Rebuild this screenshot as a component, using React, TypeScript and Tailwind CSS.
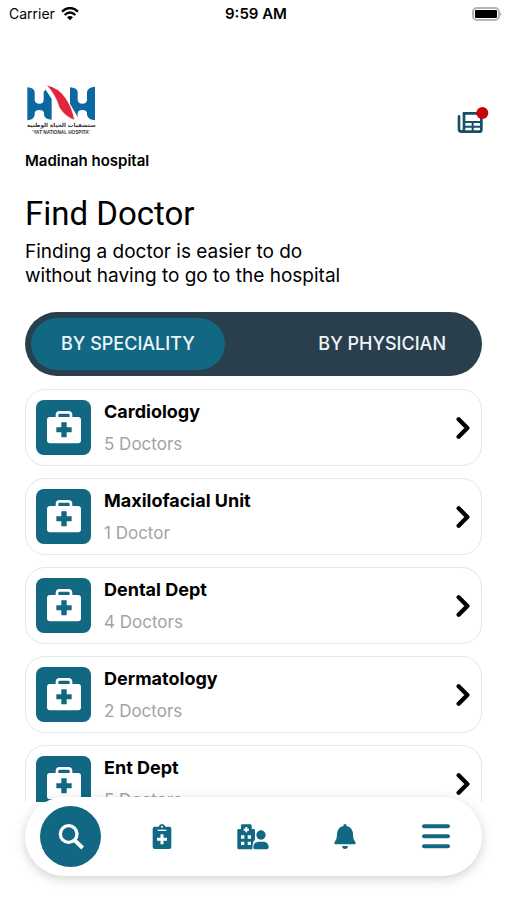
import { useState } from 'react';

type Speciality = {
    name: string;
    doctors: string;
};

const specialities: Speciality[] = [
    { name: 'Cardiology', doctors: '5 Doctors' },
    { name: 'Maxilofacial Unit', doctors: '1 Doctor' },
    { name: 'Dental Dept', doctors: '4 Doctors' },
    { name: 'Dermatology', doctors: '2 Doctors' },
    { name: 'Ent Dept', doctors: '5 Doctors' },
];

const HospitalLogo = () => (
    <svg className="block h-[50px] w-[72px]" viewBox="0 0 216 150" role="img" aria-label="Hayat National Hospital">
        <g fill="#0b68a0">
            <path d="M7 7Q26 8 29 20V44Q30 56 43 56Q56 56 56 44V20L62 14L80 42V104Q60 104 57 90V84Q56 75 43 75Q30 75 29 84V90Q27 104 7 106Z" />
            <path d="M135 7Q155 8 158 20V44Q159 56 172 56Q185 56 186 44V20Q189 6 210 5V106Q189 104 186 90V84Q185 75 172 75Q159 75 158 84V96L135 56Z" />
        </g>
        <path d="M64 0Q102 8 122 39Q142 67 149 106Q120 95 103 68Q91 28 64 0Z" fill="#e0263c" stroke="#fff" strokeWidth="2" />
        <text x="109" y="127" textAnchor="middle" fontSize="17" fontWeight="700" fill="#333" fontFamily="'DejaVu Sans', sans-serif">ستشفيات الحياة الوطنيه</text>
        <text x="108" y="146" textAnchor="middle" fontSize="14" fontWeight="700" fill="#333" fontFamily="'Liberation Sans', sans-serif">'YAT NATIONAL HOSPITA'</text>
    </svg>
);

const WifiIcon = () => (
    <svg className="h-[14px] w-[18px]" viewBox="0 0 54 42" fill="none" stroke="#000" strokeWidth="7" aria-hidden="true">
        <path d="M3 14Q27 -8 51 14" />
        <path d="M11 24Q27 9 43 24" />
        <path d="M18 31Q27 23 36 31L27 40Z" fill="#000" stroke="none" />
    </svg>
);

const BatteryIcon = () => (
    <svg className="h-[14px] w-[31px]" viewBox="0 0 31 14" role="img" aria-label="Battery full">
        <rect x="1" y="1" width="26" height="12" rx="4" fill="#fff" stroke="#b5b5b5" strokeWidth="2" />
        <rect x="3" y="3" width="22" height="8" rx="1" fill="#000" />
        <path d="M28 5Q31 7 28 9Z" fill="#b5b5b5" />
    </svg>
);

const NewsIcon = () => (
    <svg className="h-[28px] w-[32px]" viewBox="0 0 96 84" fill="none" stroke="#155068" strokeWidth="8" strokeLinejoin="round" strokeLinecap="round" aria-hidden="true">
        <path d="M21 19H73V68Q73 74 67 74H13Q6 74 6 67V28" />
        <path d="M21 19V66Q21 73 14 74" />
        <path d="M21 45H73M21 59H73M47 45V74" strokeWidth="6" />
        <circle cx="76" cy="18" r="18" fill="#c80209" stroke="none" />
    </svg>
);

const MedicalBagIcon = () => (
    <svg className="h-[34px] w-[34px]" viewBox="0 0 102 102" aria-hidden="true">
        <path d="M30 22V12Q30 4 38 4H64Q72 4 72 12V22" fill="none" stroke="#fff" strokeWidth="8" />
        <rect x="0" y="18" width="102" height="79" rx="9" fill="#fff" />
        <path d="M43 34H59V49H74V64H59V79H43V64H28V49H43Z" fill="#126783" />
    </svg>
);

const ChevronIcon = () => (
    <svg className="h-[22px] w-[14px] shrink-0" viewBox="0 0 42 66" fill="none" stroke="#000" strokeWidth="13" strokeLinecap="round" strokeLinejoin="round" aria-hidden="true">
        <path d="M8 7L34 33L8 59" />
    </svg>
);

const SearchIcon = () => (
    <svg className="h-[26px] w-[26px]" viewBox="0 0 78 78" fill="none" stroke="#fff" strokeWidth="10" aria-hidden="true">
        <circle cx="32" cy="30" r="25" />
        <path d="M49 48L74 72" strokeWidth="12" />
    </svg>
);

const ClipboardIcon = () => (
    <svg className="h-[26px] w-[20px]" viewBox="0 0 60 78" aria-hidden="true">
        <path d="M8 8H20Q22 0 30 0Q38 0 40 8H52Q58 8 58 14V69Q58 75 52 75H8Q2 75 2 69V14Q2 8 8 8Z" fill="#126783" />
        <path d="M17 19H43" stroke="#fff" strokeWidth="4" />
        <path d="M30 31V61M15 46H45" stroke="#fff" strokeWidth="9" />
        <circle cx="30" cy="8" r="3" fill="#fff" />
    </svg>
);

const HospitalUserIcon = () => (
    <svg className="h-[26px] w-[32px]" viewBox="0 0 96 78" aria-hidden="true">
        <path d="M5 15H12V5Q12 1 16 1H40Q44 1 44 5V15H50Q54 15 54 19V47Q46 53 46 76H5Q1 76 1 72V19Q1 15 5 15Z" fill="#126783" />
        <path d="M28 9V25M20 17H36" stroke="#fff" strokeWidth="6" />
        <path d="M12 34H22V44H12ZM32 34H42V44H32ZM12 53H22V63H12ZM32 53H42V63H32Z" fill="#fff" />
        <circle cx="72" cy="33" r="14" fill="#126783" />
        <path d="M64 53H80Q95 55 95 70Q95 76 90 76H54Q49 76 49 70Q49 55 64 53Z" fill="#126783" />
    </svg>
);

const BellIcon = () => (
    <svg className="h-[26px] w-[22px]" viewBox="0 0 66 78" fill="#126783" aria-hidden="true">
        <path d="M33 0Q38 0 38 6Q57 10 57 33Q57 47 64 54Q67 61 61 61H5Q-1 61 2 54Q9 47 9 33Q9 10 28 6Q28 0 33 0Z" />
        <path d="M24 66H42Q41 75 33 75Q25 75 24 66Z" />
    </svg>
);

const MenuIcon = () => (
    <svg className="h-[26px] w-[30px]" viewBox="0 0 90 78" stroke="#126783" strokeWidth="12" strokeLinecap="round" aria-hidden="true">
        <path d="M9 7H81M9 37H81M9 67H81" />
    </svg>
);

const tabs = [
    { id: 'speciality', label: 'BY SPECIALITY' },
    { id: 'physician', label: 'BY PHYSICIAN' },
];

const navItems = [
    { label: 'Appointments', icon: <ClipboardIcon /> },
    { label: 'Hospital', icon: <HospitalUserIcon /> },
    { label: 'Notifications', icon: <BellIcon /> },
    { label: 'Menu', icon: <MenuIcon /> },
];

const App = () => {
    const [activeTab, setActiveTab] = useState('speciality');

    return (
        <div className="flex h-screen flex-col overflow-hidden bg-white font-['Inter',sans-serif] text-black">
            <div className="grid h-7 shrink-0 grid-cols-3 items-center pr-1 pl-[9px] text-sm">
                <div className="flex items-center gap-1.5">
                    <span>Carrier</span>
                    <WifiIcon />
                </div>
                <span className="text-center text-[15px] leading-5 font-semibold">9:59 AM</span>
                <div className="flex justify-end">
                    <BatteryIcon />
                </div>
            </div>

            <header className="mt-[57px] flex shrink-0 items-center justify-between px-[25px]">
                <div>
                    <HospitalLogo />
                    <p className="mt-4 text-[15px] leading-5 font-semibold">Madinah hospital</p>
                </div>
                <button type="button" aria-label="News" className="-mr-[7px] mb-3.5">
                    <NewsIcon />
                </button>
            </header>

            <div className="mt-[23px] shrink-0 px-[25px]">
                <h1 className="font-['Roboto',sans-serif] text-[33px] leading-10">Find Doctor</h1>
                <p className="mt-1.5 text-[19px] leading-6">
                    Finding a doctor is easier to do
                    <br />
                    without having to go to the hospital
                </p>
            </div>

            <div className="mx-[25px] mt-6 flex h-16 shrink-0 justify-between rounded-full bg-[#2a3f4d] p-1.5" role="tablist">
                {tabs.map((tab) => (
                    <button
                        key={tab.id}
                        type="button"
                        role="tab"
                        aria-selected={activeTab === tab.id}
                        onClick={() => setActiveTab(tab.id)}
                        className={`rounded-full px-[30px] text-lg font-medium text-[#eef6fb] ${activeTab === tab.id ? 'bg-[#126783]' : ''}`}
                    >
                        {tab.label}
                    </button>
                ))}
            </div>

            <main className="min-h-0 flex-1 overflow-hidden px-[25px] pt-[13px]">
                <ul className="flex flex-col gap-3">
                    {specialities.map((speciality) => (
                        <li key={speciality.name}>
                            <button type="button" className="flex h-[77px] w-full items-center rounded-[20px] border border-[#e6e6e6] pr-[11px] pl-2.5 text-left">
                                <span className="flex h-[55px] w-[55px] shrink-0 items-center justify-center rounded-lg bg-[#126783]">
                                    <MedicalBagIcon />
                                </span>
                                <span className="ml-[13px] flex flex-1 flex-col gap-2">
                                    <span className="text-lg leading-6 font-bold">{speciality.name}</span>
                                    <span className="text-[17px] leading-6 text-[#a3a3a3]">{speciality.doctors}</span>
                                </span>
                                <ChevronIcon />
                            </button>
                        </li>
                    ))}
                </ul>
            </main>

            <nav className="relative mx-[25px] -mt-[5px] mb-6 flex h-[79px] shrink-0 items-center justify-around rounded-full bg-white shadow-[0_3px_12px_rgba(0,0,0,0.18)]">
                <button type="button" aria-label="Search" className="flex h-[61px] w-[61px] items-center justify-center rounded-full bg-[#126783]">
                    <SearchIcon />
                </button>
                {navItems.map((item) => (
                    <button key={item.label} type="button" aria-label={item.label} className="flex h-[61px] w-[61px] items-center justify-center">
                        {item.icon}
                    </button>
                ))}
            </nav>
        </div>
    );
};

export default App;
